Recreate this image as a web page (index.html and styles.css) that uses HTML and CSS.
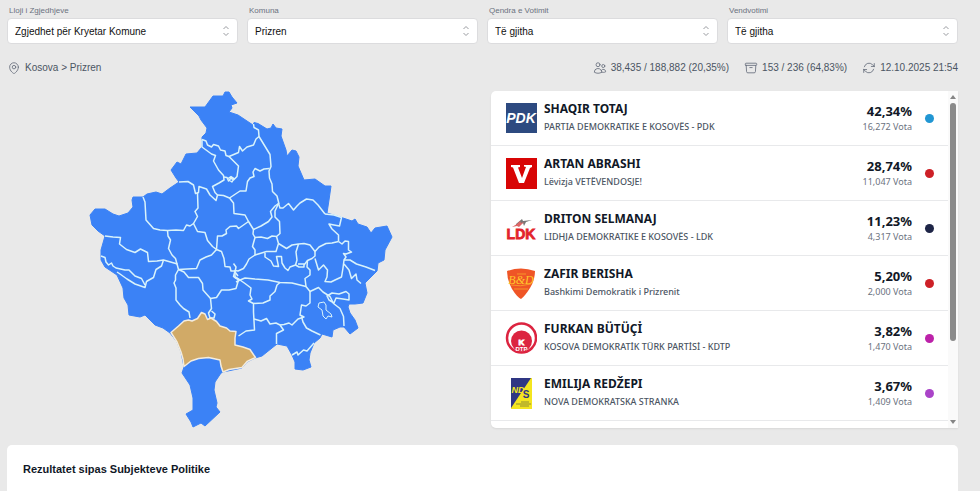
FILE: index.html
```html
<!DOCTYPE html>
<html lang="sq">
<head>
    <meta charset="UTF-8">
    <meta name="viewport" content="width=device-width, initial-scale=1.0">
    <title>Rezultatet - Prizren</title>
    <link rel="stylesheet" href="styles.css">
</head>
<body>
    <form class="filters">
        <div class="filter">
            <label for="election-type">Lloji i Zgjedhjeve</label>
            <div class="select-box">
                <select id="election-type"><option>Zgjedhet për Kryetar Komune</option></select>
                <svg class="chevrons" viewBox="0 0 8 12"><path d="M1.5 4 4 1.5 6.500 4M1.500 8 4 10.500 6.500 8"/></svg>
            </div>
        </div>
        <div class="filter">
            <label for="municipality">Komuna</label>
            <div class="select-box">
                <select id="municipality"><option>Prizren</option></select>
                <svg class="chevrons" viewBox="0 0 8 12"><path d="M1.5 4 4 1.5 6.500 4M1.500 8 4 10.500 6.500 8"/></svg>
            </div>
        </div>
        <div class="filter">
            <label for="center">Qendra e Votimit</label>
            <div class="select-box">
                <select id="center"><option>Të gjitha</option></select>
                <svg class="chevrons" viewBox="0 0 8 12"><path d="M1.5 4 4 1.5 6.500 4M1.500 8 4 10.500 6.500 8"/></svg>
            </div>
        </div>
        <div class="filter">
            <label for="station">Vendvotimi</label>
            <div class="select-box">
                <select id="station"><option>Të gjitha</option></select>
                <svg class="chevrons" viewBox="0 0 8 12"><path d="M1.5 4 4 1.5 6.500 4M1.500 8 4 10.500 6.500 8"/></svg>
            </div>
        </div>
    </form>

    <div class="info-bar">
        <div class="info-item place">
            <svg class="icon" viewBox="0 0 24 24"><path d="M15 10.500a3 3 0 1 1-6 0 3 3 0 0 1 6 0Z"/><path d="M19.500 10.500c0 7.142-7.500 11.250-7.500 11.250S4.500 17.642 4.500 10.500a7.500 7.500 0 1 1 15 0Z"/></svg>
            <span>Kosova &gt; Prizren</span>
        </div>
        <div class="info-item">
            <svg class="icon" viewBox="0 0 24 24"><path d="M15 19.128a9.380 9.380 0 0 0 2.625.372 9.337 9.337 0 0 0 4.121-.952 4.125 4.125 0 0 0-7.533-2.493M15 19.128v-.003c0-1.113-.285-2.160-.786-3.070M15 19.128v.106A12.318 12.318 0 0 1 8.624 21c-2.331 0-4.512-.645-6.374-1.766l-.001-.109a6.375 6.375 0 0 1 11.964-3.070M12 6.375a3.375 3.375 0 1 1-6.750 0 3.375 3.375 0 0 1 6.750 0Zm8.250 2.250a2.625 2.625 0 1 1-5.250 0 2.625 2.625 0 0 1 5.250 0Z"/></svg>
            <span>38,435 / 188,882 (20,35%)</span>
        </div>
        <div class="info-item">
            <svg class="icon" viewBox="0 0 24 24"><path d="m20.250 7.500-.625 10.632a2.250 2.250 0 0 1-2.247 2.118H6.622a2.250 2.250 0 0 1-2.247-2.118L3.750 7.500M10 11.250h4M3.375 7.500h17.250c.621 0 1.125-.504 1.125-1.125v-1.500c0-.621-.504-1.125-1.125-1.125H3.375c-.621 0-1.125.504-1.125 1.125v1.500c0 .621.504 1.125 1.125 1.125Z"/></svg>
            <span>153 / 236 (64,83%)</span>
        </div>
        <div class="info-item">
            <svg class="icon" viewBox="0 0 24 24"><path d="M16.023 9.348h4.992v-.001M2.985 19.644v-4.992m0 0h4.992m-4.993 0 3.181 3.183a8.250 8.250 0 0 0 13.803-3.700M4.031 9.865a8.250 8.250 0 0 1 13.803-3.700l3.181 3.182m0-4.991v4.990"/></svg>
            <span>12.10.2025 21:54</span>
        </div>
    </div>

    <main class="content">
        <div class="map">
            <svg viewBox="85 91 312 337" role="img" aria-label="Kosova">
                <!-- country shape -->
                <path class="land" d="M225 92 229 92 232 97 237 103 231 105 232 108 229 112 238 115 244 119 253 125 254 122.500 258 123.500 267 129 271 128 273 124 276 128 282 129 281 136 286 150 287 156 292 150 296 151 299 157 298 166 304 180 315 179 325 186 331 186 329 200 327 213 340 217 352 221 355 219 358 224 367 227 371 233 375 228 387 226 392 237 385 250 384 260 378 263 377 271 365 283 367 293 363 303 355 304 349 304 348 307 350 313 355 320 358 328 350 334 344 327 340 327 333 330 332 337 322 334 320 338 314 343 310 353 309 360 311 367 303 370 295 369 295 362 292 355 287 346 277 344 267 352 262 356 255 358 247 362 242 368 223 372 221 373 215 382 214 390 217 403 216 407 220 412 205 426 201 423 193 427 191 422 186 414 193 410 193 398 190 385 182 373 184 367 181 352 177 342 170 333 163 328 155 325 145 315 140 317 129 315 128 305 124 298 123 288 117 275 105 267 101 260 101 250 105 236 98 231 92 225 90 215 95 209 105 209 113 214 119 216 128 213 133 207 132 200 133 197 143 197 147 194 156 192 162 194 170 188 179 182 176 178 171 170 177 162 181 164 186 154 197 153 202 147 202 137 206 133 207 128 201 120 199 116 190 107 205 107 213 96 223 96Z"/>

                <!-- municipality borders, north -->
                <path class="border" d="M202 139.500 206 141 207.500 145 211.500 147 213.500 144.500 218.500 146 220.500 150 225 151 226 155.500 229 156.500 238.500 152.500 239.500 146.500 242.500 151 247 147 253.500 145 256 139 259 136.500 258.500 130 254 127.500 253.500 124"/>
                <path class="border" d="M259 136.500 270 154.500 271 166.500 269 171 269.500 178 272 184 272.500 191.500 277 196 279 204"/>
                <path class="border" d="M202 139.500V147L211.500 154 215.500 155.500 213.500 161 218.500 170 223.500 175.500 224 180 219 183 212.500 186.500 215 192.500 217.500 195 216 200.500 210 195 206.500 189 199 186.500 198.500 192.500 195.500 193.500 193.500 185 188 181.500 179 182"/>
                <path class="border" d="M229 156.500 235 162.500 238.500 166 237 176.500 233.500 180 231 178 228.500 181 227 177.500 223.500 177M228 178.500 231 176.500 234 178.500 232 182 229 180"/>
                <path class="border" d="M217.500 195 223.500 195.500 229.500 198 234 195 240 191 246 191 247.500 181.500 250 178 254 176.500 253 172 255 168.500 260 171 264 169 269.500 168.500"/>
                <path class="border" d="M229.500 198 233.500 203 234 213.500 245 215 248.500 221.500 253.500 229.500 261 226 268.500 221.500 272 217 270.500 211.500 275 206 278.500 203.500"/>
                <path class="border" d="M278.500 203.500 280 208 283 208 288.500 203.500 293.500 210 297 206 300 203 306.500 199 313 200 318 205 325 214"/>
                <path class="border" d="M325 214 334 215 341.500 217.500 339.500 226 334 225 329 224 332 229 338.500 235V241.500"/>

                <!-- west -->
                <path class="border" d="M143 197 145 202 146 220 153.500 228.500 160 230 167.500 230.500 176 230 183.500 230.500 186.500 225 190 226 193.500 223.500 197.500 216.500 195 211.500 198 208 197.500 193"/>
                <path class="border" d="M193.500 223.500 197.500 231.500 205 232.500 207.500 240.500 212.500 246.500 216.500 249.500 217.500 236 222 236 226.500 233.500 226 230 230 226.500 236.500 226 238.500 228.500 248.500 221.500"/>
                <path class="border" d="M167.500 230.500 168 236 170.500 240 168.500 248.500 172 255 175.500 258.500 178.500 269.500 175.500 275 175.500 280 174 283 176 288 176 300 180 305 183.500 308.500 189 312 190 318"/>
                <path class="border" d="M105 236 113 237 120.500 237.500 119.500 244 126.500 249.500 135 252.500 140.500 249 147.500 252.500 148.500 261.500 157 261 163.500 260 177.500 264"/>
                <path class="border" d="M163.500 260 161.500 266 156 269.500 153.500 277.500 149 280 146.500 281.500 145 287.500 135 284 127 279 120 274 117 272"/>
                <path class="border" d="M101 256 105 257.500 106 262 108.500 265 111.500 263 113 266 116 268 125 270 129 270 135 276 141.500 278.500 145 285"/>
                <path class="border" d="M178.500 269.500 187 269 196.500 268.500 200 260 206 257 211.500 255 216.500 249.500"/>
                <path class="border" d="M178.500 269.500 184 272 188.500 277.500 198.500 277.500 202.500 283.500 203 290 210.500 298.500 211.500 308.500 208.500 313 210 318 214 318 215 314 211.500 311"/>

                <!-- centre -->
                <path class="border" d="M210.500 298.500 216.500 297.500 221.500 290 229 290 236 288.500 238.500 280 233.500 276.500 235 271 231 271 230 267 225 266.500 224 258.500 221.500 251.500 216.500 249.500"/>
                <path class="border" d="M253.500 229.500 253 234 255 237.500 252.500 246.500 255 250 255 255 249 259 246.500 264 243.500 268.500 238 271 235 270.500 235 276.500 240 280 245 278 255 279 268 280 280 282.500 292 283 306 286.500"/>
                <path class="border" d="M233.500 263.500 236 267 235 272 238 276M234 277 240 280 236 282"/>
                <path class="border" d="M255 237.500 261 237 267.500 238.500 272 236 276.500 236.500 280 233.500 279.500 221.500 275 217 275 211 278.500 203.500"/>
                <path class="border" d="M276.500 236.500 278.500 243.500 276 251.500 266.500 251.500 255 255"/>
                <path class="border" d="M278.500 243.500 286.500 248.500 292 245 298.500 244 304 243.500 310 245 315 251.500 319 247 326 243.500 332 243 338.500 241.500"/>
                <path class="border" d="M298.500 244 296 252 297 260 295.500 265 290 267 288 270.500 285 268 282 263 281.500 256.500 276.500 256.500 278.500 266.500 273.500 266 271 261 265 257 265 253"/>
                <path class="border" d="M295.500 265 299 267 304 267 304 264 298 264M304 265 307.500 260.500 312 258.500 315 256 315 251.500"/>
                <path class="border" d="M240 280 245 283.500 251 288 250 295 252 299 248.500 301 253.500 303.500 263 303 270 300 270 296 275 291.500 277 285 280 282.500"/>

                <!-- east -->
                <path class="border" d="M315 258.500 318.500 270 323.500 265 327.500 270 327 277 325 281.500 331 282 335 280 341.500 277 343 268 344 260 350 260 356.500 264 366 267 375 270.500"/>
                <path class="border" d="M338.500 241.500 342 244 345 241 348.500 241.500 348.500 250 351.500 252 346 254 343.500 253.500 346 257 344 260M344 264 349 270 351.500 278.500 356 274 357 280 361 283.500"/>
                <path class="border" d="M307.500 260.500 307 267 310 270 310 275 305 278.500 306 286.500 310 291.500 318.500 287.500 323 292 330 296.500 333.500 303.500 340 308.500 343.500 316.500 344 326"/>
                <path class="border" d="M327 296 332 293 339 294 346 291.500 349 294 349 300 343 299 336 298 334 303 329 300Z"/>
                <path class="border thin" d="M319 303 324 302 326 305 326 310 331 314 332 317 328 316 326 319 323 316 322 310 318 307Z"/>

                <!-- south -->
                <path class="border" d="M253.500 303.500 253.500 312 254.500 330 246 331 238.500 336"/>
                <path class="border" d="M254 319 261 321 266.500 318.500 270 324 276 323 280 325 283.500 330 276.500 333.500V344"/>
                <path class="border" d="M280 325 284 324.500 289 323 292 325 298 319 304 317 300 315 301.500 305 306 306 310 303 310 291.500"/>
                <path class="border" d="M301.500 316.500 303 322 306.500 328 312 331 320.500 335M292 355 297 352 298 355 303.500 350 307 351 314 343"/>

                <path class="border selected" d="M171 332.500 178.500 326 184 321 188.500 320 192 321 197.500 318.500 201.500 312.500 205 314 207.500 319.500 211 318 216.500 321.500 220 326 226.500 328 230 331 236 331.500 235 338 235 345 243 347 250 349.500 255.500 357.500 247 361.500 242 367.500 229 369.500 223 372 221 366 220 360 208.500 357.500 198.500 358.500 191 361 184 366.500 183 359 181 352 177 342Z"/>
            </svg>
        </div>

        <section class="results">
            <ul class="candidates">
                <li class="candidate">
                    <svg class="logo" viewBox="0 0 32 32">
                        <rect x="1" y="1" width="31" height="30" fill="#2d4a80"/>
                        <text x="16" y="21" class="logo-text" font-size="14" font-style="italic" fill="#fff">PDK</text>
                    </svg>
                    <div class="names"><h2>SHAQIR TOTAJ</h2><p>PARTIA DEMOKRATIKE E KOSOVËS - PDK</p></div>
                    <div class="votes"><strong>42,34%</strong><span>16,272 Vota</span></div>
                    <span class="dot blue"></span>
                </li>
                <li class="candidate">
                    <svg class="logo" viewBox="0 0 32 32">
                        <rect x="1" y="1" width="31" height="31" fill="#d80505"/>
                        <path fill="#fff" d="M6 8h9v2l-2 .5 4 10.500 4-11-2-.5V8h8v2l-2 1-6 15h-5L8 10.500 6 10Z"/>
                    </svg>
                    <div class="names"><h2>ARTAN ABRASHI</h2><p>Lëvizja VETËVENDOSJE!</p></div>
                    <div class="votes"><strong>28,74%</strong><span>11,047 Vota</span></div>
                    <span class="dot red"></span>
                </li>
                <li class="candidate">
                    <svg class="logo" viewBox="0 0 32 32">
                        <path fill="#777" d="m11 12 6-5 1 2 9-1-6 2-2 4-1-3-7 3Z"/>
                        <path fill="#d66" d="m7 15 5-3 3-3 1 2 3-1-5 5-2-1Z"/>
                        <text x="16" y="27" class="logo-text" font-size="14" fill="#e3242b" stroke="#e3242b" stroke-width=".8">LDK</text>
                    </svg>
                    <div class="names"><h2>DRITON SELMANAJ</h2><p>LIDHJA DEMOKRATIKE E KOSOVËS - LDK</p></div>
                    <div class="votes"><strong>11,23%</strong><span>4,317 Vota</span></div>
                    <span class="dot navy"></span>
                </li>
                <li class="candidate">
                    <svg class="logo" viewBox="0 0 32 32">
                        <path fill="#ef5526" d="M2 4Q16-1 30 4 30 13 25 21 20 29 16 32 12 30 7 22 2 13 2 4Z"/>
                        <text x="16" y="17" class="script-text" font-size="12" fill="#ffc72c">B&amp;D</text>
                        <path fill="none" stroke="#f9a72b" stroke-width=".8" d="M6 18Q15 20 26 17M9 22h14M12 7h9"/>
                    </svg>
                    <div class="names"><h2>ZAFIR BERISHA</h2><p>Bashkimi Demokratik i Prizrenit</p></div>
                    <div class="votes"><strong>5,20%</strong><span>2,000 Vota</span></div>
                    <span class="dot red"></span>
                </li>
                <li class="candidate">
                    <svg class="logo" viewBox="0 0 32 32">
                        <circle cx="16.500" cy="16" r="14.500" fill="#fff" stroke="#dc2440" stroke-width="2.500"/>
                        <circle cx="16.500" cy="19" r="10.500" fill="#dc2440"/>
                        <text x="16.500" y="23" class="logo-text" font-size="8" fill="#fff" stroke="#fff" stroke-width=".8">K</text>
                        <text x="16.500" y="29" class="logo-text" font-size="6" fill="#fff">DTP</text>
                    </svg>
                    <div class="names"><h2>FURKAN BÜTÜÇİ</h2><p>KOSOVA DEMOKRATİK TÜRK PARTİSİ - KDTP</p></div>
                    <div class="votes"><strong>3,82%</strong><span>1,470 Vota</span></div>
                    <span class="dot magenta"></span>
                </li>
                <li class="candidate">
                    <svg class="logo" viewBox="0 0 32 32">
                        <path fill="#f4e51f" d="M6 1h21v31H6Z"/>
                        <path fill="#2f3683" d="M6 1h20L6 31Z"/>
                        <text x="13" y="16" class="logo-text" font-size="9" font-style="italic" fill="#f4e51f">ND</text>
                        <text x="21" y="21" class="logo-text" font-size="10" fill="#2f3683">S</text>
                        <path stroke="#77773a" stroke-width=".8" d="M16 25h8M11 27h15M15 29h9"/>
                    </svg>
                    <div class="names"><h2>EMILIJA REDŽEPI</h2><p>NOVA DEMOKRATSKA STRANKA</p></div>
                    <div class="votes"><strong>3,67%</strong><span>1,409 Vota</span></div>
                    <span class="dot purple"></span>
                </li>
            </ul>
            <div class="scrollbar">
                <svg class="arrow" viewBox="0 0 6 4"><path d="M0 4 3 0 6 4Z"/></svg>
                <div class="track"><div class="thumb"></div></div>
                <svg class="arrow" viewBox="0 0 6 4"><path d="M0 0 3 4 6 0Z"/></svg>
            </div>
        </section>
    </main>

    <section class="summary">
        <h3>Rezultatet sipas Subjekteve Politike</h3>
    </section>
</body>
</html>
```
FILE: styles.css
```css
* {
    box-sizing: border-box;
}

body {
    margin: 0;
    padding: 5px 22px 0 7px;
    background: #e9e9e9;
    font-family: "Liberation Sans", Arial, sans-serif;
    color: #111827;
}

h2, h3, p, ul {
    margin: 0;
    padding: 0;
}

.filters {
    display: grid;
    grid-template-columns: repeat(4, 1fr);
    gap: 9px;
}

.filter label {
    display: block;
    padding-left: 2px;
    font-size: 8px;
    line-height: 12px;
    color: #6b7280;
}

.select-box {
    position: relative;
    margin-top: 1px;
}

.select-box select {
    appearance: none;
    display: block;
    width: 100%;
    height: 26px;
    padding: 0 24px 0 7px;
    border: 1px solid #dcdcde;
    border-radius: 4px;
    background: #fff;
    font-family: inherit;
    font-size: 10px;
    color: #111;
}

.chevrons {
    position: absolute;
    right: 8px;
    top: 7px;
    width: 8px;
    height: 12px;
    fill: none;
    stroke: #9a9ca1;
    pointer-events: none;
}

.info-bar {
    display: flex;
    align-items: center;
    gap: 15px;
    margin-top: 17px;
    font-size: 10px;
    line-height: 14px;
    color: #4b5563;
}

.info-item {
    display: flex;
    align-items: center;
    gap: 4px;
}

.place {
    margin-right: auto;
}

.icon {
    width: 14px;
    height: 14px;
    fill: none;
    stroke: #6b7280;
    stroke-width: 1.5;
    stroke-linecap: round;
    stroke-linejoin: round;
}

.content {
    display: grid;
    grid-template-columns: 1fr 1fr;
    gap: 17px;
    margin-top: 16px;
}

.map {
    display: flex;
    justify-content: center;
    align-items: flex-start;
}

.map svg {
    display: block;
    width: 312px;
    max-width: 100%;
}

.land {
    fill: #3b82f6;
    stroke: #3b82f6;
    stroke-linejoin: round;
}

.border {
    fill: none;
    stroke: #d9f3fb;
    stroke-width: 1.5;
    stroke-linejoin: round;
}

.thin {
    stroke-width: 1;
}

.selected {
    fill: #d1aa67;
    stroke: #f3ecdf;
}

.results {
    display: flex;
    height: 337px;
    overflow: hidden;
    border-radius: 5px 0 0 5px;
    background: #fff;
    box-shadow: 0 1px 2px rgba(0, 0, 0, 0.08);
    font-family: "Noto Sans", "Open Sans", sans-serif;
}

.candidates {
    flex: 1;
    list-style: none;
}

.candidate {
    display: flex;
    align-items: center;
    height: 55px;
    padding: 0 14px;
    border-bottom: 1px solid #e8e9eb;
}

.logo {
    width: 32px;
    height: 32px;
}

.logo-text {
    font-family: "Liberation Sans", Arial, sans-serif;
    font-weight: bold;
    text-anchor: middle;
}

.script-text {
    font-family: "Liberation Serif", serif;
    font-style: italic;
    text-anchor: middle;
}

.names {
    flex: 1;
    padding-left: 7px;
}

.names h2 {
    font-size: 12px;
    line-height: 18px;
    font-weight: 700;
}

.names p {
    font-size: 9px;
    line-height: 18px;
    font-weight: 500;
    color: #4b5563;
}

.votes {
    text-align: right;
}

.votes strong {
    display: block;
    font-size: 13px;
    line-height: 18px;
}

.votes span {
    display: block;
    font-size: 9px;
    line-height: 14px;
    color: #6b7280;
}

.dot {
    width: 9px;
    height: 9px;
    margin-left: 13px;
    border-radius: 50%;
}

.blue {
    background: #2196d3;
}

.red {
    background: #cd2027;
}

.navy {
    background: #1e2547;
}

.magenta {
    background: #bc22a9;
}

.purple {
    background: #aa44c8;
}

.scrollbar {
    display: flex;
    flex-direction: column;
    align-items: center;
    justify-content: space-between;
    width: 10px;
    padding: 4px 0;
    background: #fafafa;
}

.arrow {
    width: 6px;
    height: 4px;
    fill: #858585;
}

.track {
    flex: 1;
    width: 6px;
    padding: 4px 0;
}

.thumb {
    height: 76%;
    border-radius: 3px;
    background: #8a8a8a;
}

.summary {
    margin-top: 17px;
    padding: 16px 16px 24px;
    border-radius: 5px;
    background: #fff;
}

.summary h3 {
    font-size: 11px;
    line-height: 16px;
}
```
